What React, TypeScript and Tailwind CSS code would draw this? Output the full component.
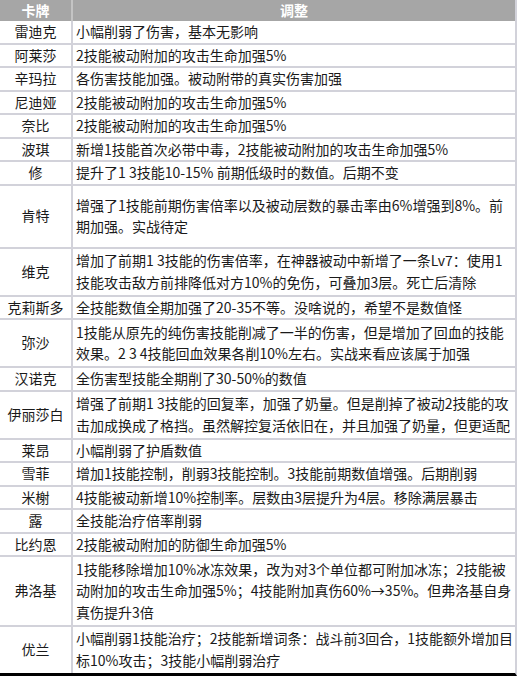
const rows: { name: string; lines: string[]; pad?: boolean }[] = [
  { name: '雷迪克', lines: ['小幅削弱了伤害，基本无影响'] },
  { name: '阿莱莎', lines: ['2技能被动附加的攻击生命加强5%'] },
  { name: '辛玛拉', lines: ['各伤害技能加强。被动附带的真实伤害加强'] },
  { name: '尼迪娅', lines: ['2技能被动附加的攻击生命加强5%'] },
  { name: '奈比', lines: ['2技能被动附加的攻击生命加强5%'] },
  { name: '波琪', lines: ['新增1技能首次必带中毒，2技能被动附加的攻击生命加强5%'] },
  { name: '修', lines: ['提升了1 3技能10-15% 前期低级时的数值。后期不变'] },
  {
    name: '肯特',
    pad: true,
    lines: ['增强了1技能前期伤害倍率以及被动层数的暴击率由6%增强到8%。前', '期加强。实战待定'],
  },
  {
    name: '维克',
    lines: ['增加了前期1 3技能的伤害倍率，在神器被动中新增了一条Lv7：使用1', '技能攻击敌方前排降低对方10%的免伤，可叠加3层。死亡后清除'],
  },
  { name: '克莉斯多', lines: ['全技能数值全期加强了20-35不等。没啥说的，希望不是数值怪'] },
  {
    name: '弥沙',
    lines: ['1技能从原先的纯伤害技能削减了一半的伤害，但是增加了回血的技能', '效果。2 3 4技能回血效果各削10%左右。实战来看应该属于加强'],
  },
  { name: '汉诺克', lines: ['全伤害型技能全期削了30-50%的数值'] },
  {
    name: '伊丽莎白',
    lines: ['增强了前期1 3技能的回复率，加强了奶量。但是削掉了被动2技能的攻', '击加成换成了格挡。虽然解控复活依旧在，并且加强了奶量，但更适配'],
  },
  { name: '莱昂', lines: ['小幅削弱了护盾数值'] },
  { name: '雪菲', lines: ['增加1技能控制，削弱3技能控制。3技能前期数值增强。后期削弱'] },
  { name: '米榭', lines: ['4技能被动新增10%控制率。层数由3层提升为4层。移除满层暴击'] },
  { name: '露', lines: ['全技能治疗倍率削弱'] },
  { name: '比约恩', lines: ['2技能被动附加的防御生命加强5%'] },
  {
    name: '弗洛基',
    lines: [
      '1技能移除增加10%冰冻效果，改为对3个单位都可附加冰冻；2技能被',
      '动附加的攻击生命加强5%；4技能附加真伤60%→35%。但弗洛基自身',
      '真伤提升3倍',
    ],
  },
  {
    name: '优兰',
    lines: ['小幅削弱1技能治疗；2技能新增词条：战斗前3回合，1技能额外增加目', '标10%攻击；3技能小幅削弱治疗'],
  },
]

export default function App() {
  return (
    <div
      className="w-[517px] h-[679px] overflow-hidden bg-white text-[14px] text-[#1a1a1a]"
      style={{ fontFamily: '"Microsoft YaHei", "Noto Sans CJK SC", "Noto Sans", sans-serif' }}
    >
      <div className="border-r-2 border-b-[3px] border-r-[#d2d2da] border-b-black">
        {/* Header */}
        <div className="flex h-[21px] bg-[#a6a6a6] font-bold text-white leading-[21px]">
          <div className="w-[73px] shrink-0 border-r-2 border-[#c4c4c4] text-center">卡牌</div>
          <div className="flex-1 text-center">调整</div>
        </div>

        {rows.map((row, i) => {
          const multi = row.lines.length > 1
          return (
            <div
              key={i}
              className={`flex leading-[21.5px] ${i === rows.length - 1 ? '' : 'border-b-2 border-[#d2d2da]'}`}
            >
              <div className="w-[73px] shrink-0 border-r-2 border-[#d2d2da] flex items-center justify-center whitespace-nowrap">
                {row.name}
              </div>
              <div
                className={`flex-1 min-w-0 overflow-hidden pl-[3px] ${
                  row.pad ? 'py-[9px]' : multi ? 'py-[1.5px]' : 'py-0'
                }`}
              >
                {row.lines.map((line, j) => (
                  <div key={j} className="whitespace-nowrap">
                    {line}
                  </div>
                ))}
              </div>
            </div>
          )
        })}
      </div>
    </div>
  )
}
